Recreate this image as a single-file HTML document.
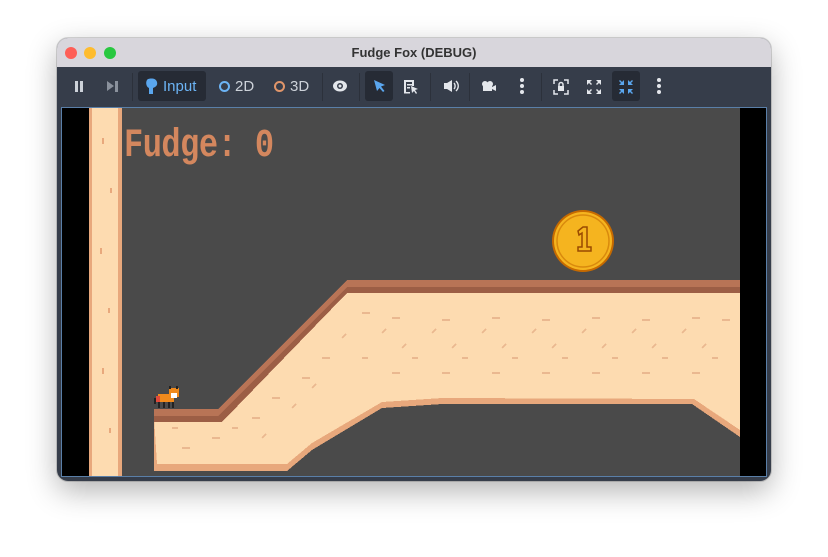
<!DOCTYPE html>
<html><head><style>
*{margin:0;padding:0;box-sizing:border-box}
body{width:828px;height:557px;background:#fff;position:relative;overflow:hidden;font-family:"Liberation Sans",sans-serif}
.win{position:absolute;left:57px;top:38px;width:714px;height:443px;border-radius:11px;background:#363d4a;overflow:hidden;box-shadow:0 10px 30px rgba(0,0,0,.3),0 0 0 1px rgba(0,0,0,.15)}
.title{position:absolute;left:0;top:0;width:714px;height:29px;background:#d8d6dc;text-align:center;font-weight:bold;font-size:13px;color:#333;line-height:29px}
.dot{position:absolute;top:9px;width:12px;height:12px;border-radius:50%}
.tb{position:absolute;top:29px;left:0;width:714px;height:39px;background:#363d4a}
.ab{position:absolute;color:#cdd2d9;font-size:15px}
.sep{position:absolute;top:35px;width:1px;height:28px;background:#2c313b}
.btnbg{position:absolute;background:#262b35;border-radius:3px}
.view{position:absolute;left:4px;top:69px;width:706px;height:370px;border:1px solid #5a7fa8;background:#4a4a4a;overflow:hidden}
</style></head><body>
<div class="win">
<div class="title">Fudge Fox (DEBUG)</div>
<div class="dot" style="left:8px;background:#fe5f57"></div>
<div class="dot" style="left:27px;background:#febc2e"></div>
<div class="dot" style="left:47px;background:#28c840"></div>
<div class="tb"></div>
<div style="position:absolute;left:18px;top:43px;width:3px;height:11px;background:#cdd2d9"></div>
<div style="position:absolute;left:23px;top:43px;width:3px;height:11px;background:#cdd2d9"></div>
<div style="position:absolute;left:50px;top:43px;width:0;height:0;border-left:7px solid #8a919c;border-top:5.5px solid transparent;border-bottom:5.5px solid transparent"></div>
<div style="position:absolute;left:58px;top:43px;width:3px;height:11px;background:#8a919c"></div>
<div class="sep" style="left:75px"></div>
<div class="btnbg" style="left:81px;top:33px;width:68px;height:30px"></div>
<svg style="position:absolute;left:88px;top:40px" width="14" height="17"><path d="M3 1c3-1 8-1 9 3s-2 5-4 6v6H4v-6C1 9 0 3 3 1z" fill="#5aa6ee"/></svg>
<div class="ab" style="left:106px;top:40px;color:#6cb4f5">Input</div>
<div style="position:absolute;left:162px;top:43px;width:11px;height:11px;border:2px solid #6cb4f5;border-radius:50%"></div>
<div class="ab" style="left:178px;top:40px">2D</div>
<div style="position:absolute;left:217px;top:43px;width:11px;height:11px;border:2px solid #e0956a;border-radius:50%"></div>
<div class="ab" style="left:233px;top:40px">3D</div>
<div class="sep" style="left:265px"></div>
<svg style="position:absolute;left:275px;top:42px" width="16" height="12"><ellipse cx="8" cy="6" rx="7" ry="5.5" fill="#e4e7ec"/><circle cx="8" cy="6" r="3" fill="#363d4a"/><circle cx="8" cy="6" r="1.5" fill="#e4e7ec"/></svg>
<div class="sep" style="left:302px"></div>
<div class="btnbg" style="left:308px;top:33px;width:28px;height:30px"></div>
<svg style="position:absolute;left:316px;top:41px" width="14" height="14"><path d="M1 1L12 6 8 7.5 11.5 12 10 13 6.5 9 4 12z" fill="#5aa6ee"/></svg>
<svg style="position:absolute;left:346px;top:41px" width="16" height="15"><path d="M1 1h10v6H9V3H3v10h4v1.5H1z M4 5h5v1.5H4z M4 8h3v1.5H4z" fill="#e4e7ec"/><path d="M8 7l7 3-3 1 2 3-1 1-2-3-2 2z" fill="#e4e7ec"/></svg>
<div class="sep" style="left:373px"></div>
<svg style="position:absolute;left:386px;top:41px" width="16" height="14"><path d="M1 4h3l5-3v12L4 10H1z" fill="#e4e7ec"/><path d="M11 4c1.5 1.5 1.5 4.5 0 6M13 2c3 3 3 7 0 10" stroke="#e4e7ec" stroke-width="1.4" fill="none"/></svg>
<div class="sep" style="left:412px"></div>
<svg style="position:absolute;left:424px;top:42px" width="16" height="12"><circle cx="4" cy="4" r="3" fill="#e4e7ec"/><circle cx="9" cy="4" r="3" fill="#e4e7ec"/><rect x="2" y="5" width="9" height="6" fill="#e4e7ec"/><path d="M11 7l4-2v6l-4-2z" fill="#e4e7ec"/></svg>
<div style="position:absolute;left:463px;top:40px;width:4px;height:4px;border-radius:50%;background:#e4e7ec;box-shadow:0 6px 0 #e4e7ec,0 12px 0 #e4e7ec"></div>
<div class="sep" style="left:484px"></div>
<svg style="position:absolute;left:496px;top:41px" width="16" height="16" fill="none" stroke="#e4e7ec" stroke-width="1.5"><path d="M1 5V1h4M11 1h4v4M15 11v4h-4M5 15H1v-4"/><rect x="5" y="7" width="6" height="5" fill="#e4e7ec" stroke="none"/><path d="M6 7V5.5a2 2 0 014 0V7"/></svg>
<svg style="position:absolute;left:529px;top:41px" width="16" height="16" fill="#e4e7ec"><path d="M1 1h5L4 3l2 2-1 1-2-2-2 2zM15 1v5l-2-2-2 2-1-1 2-2-2-2zM15 15h-5l2-2-2-2 1-1 2 2 2-2zM1 15v-5l2 2 2-2 1 1-2 2 2 2z"/></svg>
<div class="btnbg" style="left:555px;top:33px;width:28px;height:30px"></div>
<svg style="position:absolute;left:561px;top:41px" width="16" height="16" fill="#5aa6ee"><path d="M6 6H1l2-2-2-2 1-1 2 2 2-2zM10 6V1l2 2 2-2 1 1-2 2 2 2zM10 10h5l-2 2 2 2-1 1-2-2-2 2zM6 10v5l-2-2-2 2-1-1 2-2-2-2z"/></svg>
<div style="position:absolute;left:600px;top:40px;width:4px;height:4px;border-radius:50%;background:#e4e7ec;box-shadow:0 6px 0 #e4e7ec,0 12px 0 #e4e7ec"></div>

<div class="view">
<svg width="706" height="370" style="position:absolute;left:0;top:0" shape-rendering="crispEdges">
<rect x="0" y="0" width="27" height="370" fill="#000"/>
<rect x="678" y="0" width="28" height="370" fill="#000"/>
<rect x="27" y="0" width="33" height="370" fill="#e8a87c"/>
<rect x="30" y="0" width="26" height="370" fill="#fddbb0"/>
<g fill="#e8a87c"><rect x="40" y="30" width="2" height="6"/><rect x="48" y="80" width="2" height="5"/><rect x="38" y="140" width="2" height="6"/><rect x="46" y="200" width="2" height="5"/><rect x="40" y="260" width="2" height="6"/><rect x="47" y="320" width="2" height="5"/></g>
<polygon points="92,303 156,303 285,174 678,174 678,329 630,296 380,296 320,300 250,342 225,363 92,363" fill="#e8a87c"/>
<polygon points="92,309 156,309 285,180 678,180 678,322 632,291 380,290 320,294 250,335 225,356 95,356" fill="#fddbb0"/>
<polygon points="92,303 156,303 285,174 678,174 678,185 285,185 160,314 92,314" fill="#9c5e45"/>
<polygon points="92,301 156,301 285,172 678,172 678,179 285,179 156,308 92,308" fill="#b87456"/>
<g stroke="#eab890" stroke-width="2" fill="none">
<path d="M300 205h8M330 210h8M380 212h8M430 210h8M480 212h8M530 210h8M580 212h8M630 210h8M660 212h8M320 225l4-4M370 225l4-4M420 225l4-4M470 225l4-4M520 225l4-4M570 225l4-4M620 225l4-4M340 240l4-4M390 240l4-4M440 240l4-4M490 240l4-4M540 240l4-4M590 240l4-4M640 240l4-4M300 250h6M350 250h6M400 250h6M450 250h6M500 250h6M550 250h6M600 250h6M650 250h6M330 265h8M380 265h8M430 265h8M480 265h8M530 265h8M580 265h8M630 265h8M260 250h8M240 270h8M210 290h8M190 310h8M150 330h8M120 340h8M200 330l4-4M250 280l4-4M280 230l4-4M230 300l4-4M110 320h6M170 320h6"/>
</g>
</svg>
<div style="position:absolute;left:62px;top:18px;font-family:'Liberation Mono',monospace;font-weight:bold;font-size:32px;color:#d4875e;transform:scaleY(1.25);transform-origin:top left;letter-spacing:-0.5px;line-height:32px">Fudge: 0</div>
<svg style="position:absolute;left:489px;top:101px" width="64" height="64"><circle cx="32" cy="32" r="31" fill="#c66a00"/><circle cx="32" cy="32" r="29" fill="#f5b41f"/><circle cx="32" cy="32" r="26" fill="none" stroke="#d98a0d" stroke-width="1.5"/><path d="M27 22l5-4h4v20h4v4H27v-4h4V24l-3 2z" fill="#f5b41f" stroke="#9a4a00" stroke-width="1.5"/></svg>
<svg style="position:absolute;left:90px;top:277px" width="30" height="25" shape-rendering="crispEdges"><rect x="6" y="9" width="16" height="8" fill="#f08a1c"/><rect x="4" y="11" width="4" height="6" fill="#e04a3a"/><rect x="17" y="3" width="10" height="9" fill="#f08a1c"/><rect x="19" y="8" width="6" height="5" fill="#fff"/><rect x="17" y="1" width="2" height="3" fill="#222"/><rect x="24" y="1" width="2" height="3" fill="#222"/><rect x="6" y="17" width="2" height="6" fill="#222"/><rect x="11" y="17" width="2" height="6" fill="#222"/><rect x="16" y="17" width="2" height="6" fill="#222"/><rect x="20" y="17" width="2" height="6" fill="#222"/><rect x="2" y="13" width="2" height="6" fill="#222"/></svg>
</div>
</div>
</body></html>
